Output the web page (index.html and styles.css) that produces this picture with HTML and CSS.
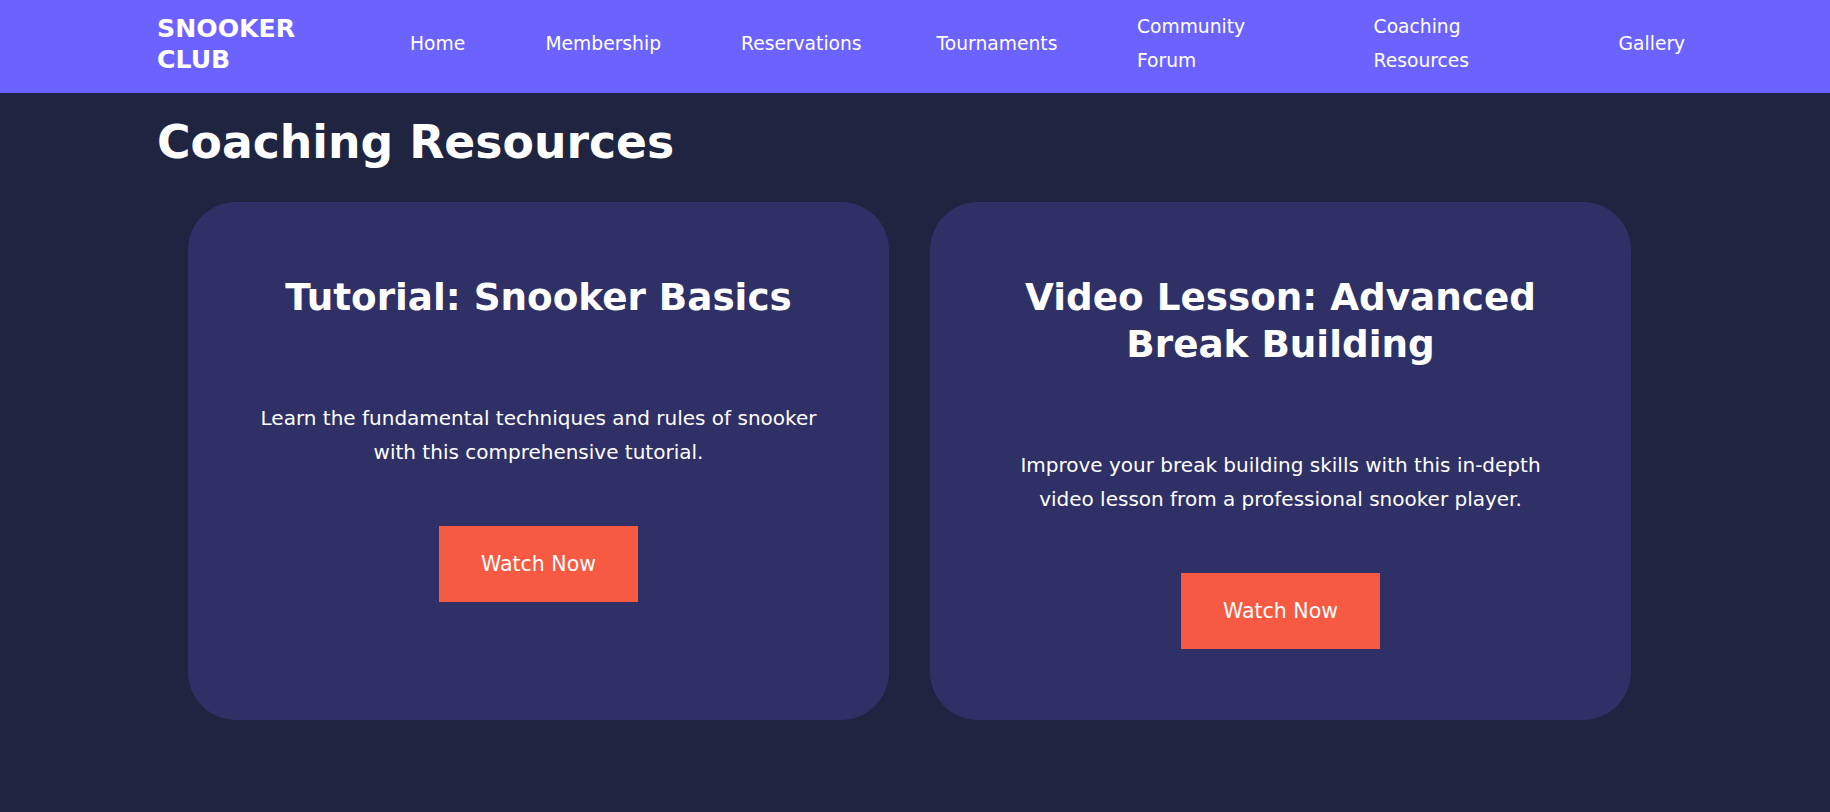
FILE: index.html
```html
<!DOCTYPE html>
<html lang="en">
<head>
<meta charset="utf-8">
<title>Snooker Club - Coaching Resources</title>
<link rel="stylesheet" href="styles.css">
</head>
<body>
<header class="site-header">
  <div class="logo">SNOOKER CLUB</div>
  <nav>
    <ul class="nav">
      <li><a href="#">Home</a></li>
      <li><a href="#">Membership</a></li>
      <li><a href="#">Reservations</a></li>
      <li><a href="#">Tournaments</a></li>
      <li><a href="#">Community Forum</a></li>
      <li><a href="#">Coaching Resources</a></li>
      <li><a href="#">Gallery</a></li>
    </ul>
  </nav>
</header>
<main class="content">
  <h1 class="page-title">Coaching Resources</h1>
  <div class="cards">
    <section class="card">
      <h2 class="card-title">Tutorial: Snooker Basics</h2>
      <p class="card-text">Learn the fundamental techniques and rules of snooker with this comprehensive tutorial.</p>
      <a class="btn" href="#">Watch Now</a>
    </section>
    <section class="card">
      <h2 class="card-title">Video Lesson: Advanced Break Building</h2>
      <p class="card-text">Improve your break building skills with this in-depth video lesson from a professional snooker player.</p>
      <a class="btn" href="#">Watch Now</a>
    </section>
  </div>
</main>
</body>
</html>
```
FILE: styles.css
```css
html, body {
  margin: 0;
  padding: 0;
}

body {
  background: #1f2441;
  color: #ffffff;
  font-family: "DejaVu Sans", "Noto Sans", sans-serif;
  min-height: 812px;
}

.site-header {
  background: #6c63ff;
  height: 93px;
  box-sizing: border-box;
  padding: 0 0 6px 157px;
  display: flex;
  align-items: center;
}

.logo {
  width: 150px;
  margin-right: 103px;
  font-weight: 700;
  font-size: 25.2px;
  line-height: 31px;
  color: #ffffff;
}

.nav {
  display: grid;
  grid-template-columns: 55.5px 115.5px 115.6px 120.4px 156.6px 165px 62px;
  column-gap: 80px;
  align-items: center;
  list-style: none;
  margin: 0;
  padding: 0;
  font-size: 18.7px;
  line-height: 34px;
}

.nav a {
  color: #ffffff;
  text-decoration: none;
}

.content {
  padding: 23px 0 0 157px;
}

.page-title {
  margin: 0 0 33px;
  font-size: 45.7px;
  line-height: 53px;
  font-weight: 700;
  color: #ffffff;
}

.cards {
  display: grid;
  grid-template-columns: 701px 701px;
  column-gap: 41px;
  margin-left: 31px;
}

.card {
  background: #2f3166;
  border-radius: 48px;
  padding: 72px 65px 71px;
  display: flex;
  flex-direction: column;
  align-items: center;
  text-align: center;
}

.card-title {
  margin: 0;
  font-size: 37.3px;
  line-height: 47px;
  font-weight: 700;
}

.card-text {
  margin: 81px 0 0;
  font-size: 20px;
  line-height: 33.6px;
}

.btn {
  display: inline-block;
  margin-top: 56.5px;
  background: #f75a43;
  color: #ffffff;
  text-decoration: none;
  font-size: 20.5px;
  line-height: 76px;
  padding: 0 41.7px;
}
```
